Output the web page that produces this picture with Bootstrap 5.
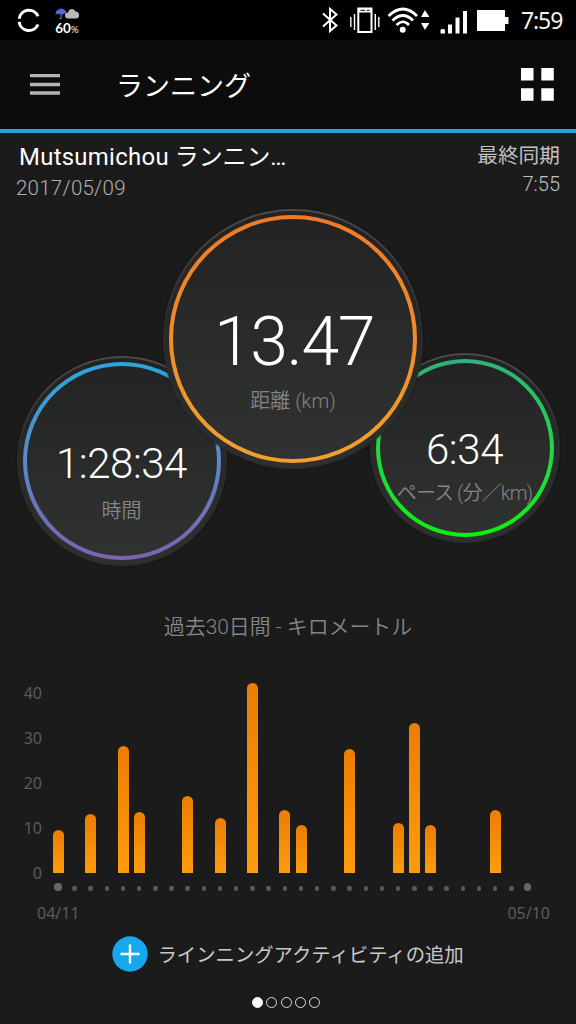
<!DOCTYPE html>
<html lang="ja">
<head>
<meta charset="utf-8">
<meta name="viewport" content="width=device-width, initial-scale=1">
<title>ランニング</title>
<link href="https://cdn.jsdelivr.net/npm/bootstrap@5.3.0/dist/css/bootstrap.min.css" rel="stylesheet">
<style>
body{width:576px;height:1024px;background:#1b1b1b;color:#fff;font-family:Roboto,"Noto Sans CJK JP",sans-serif;overflow:hidden;line-height:1}
.statusbar{height:40px;background:#000}
.statusbar svg{display:block}
.clock{font:400 23px/40px "Noto Sans",sans-serif;letter-spacing:-1.1px;width:56px;padding-left:1px;color:#f2f2f2}
.appbar{height:93px;background:#0c0c0c;border-bottom:4px solid #2ca2dc;box-shadow:0 2px 0 #09202d;padding:0 22px 0 30px}
.appbar h1{font-size:27px;font-weight:400;line-height:89px;margin:0 auto 0 56px;padding-top:5px}
.info{height:76px;padding:8px 16px 0;white-space:nowrap}
.nm{font-size:23.9px;line-height:32px;padding-left:3px}
.nm span{letter-spacing:.3px}
.dt{font-size:20.5px;line-height:30px;font-weight:300;color:#b0b0b0;letter-spacing:.25px}
.sync{font-size:20.7px;line-height:30px;color:#c0c0c0;font-weight:400}
.sync .at{font-size:20px;font-weight:300;line-height:26px}
.dials{height:357px;padding-left:16.5px}
.dial{border-radius:50%;flex:none;background:linear-gradient(#4c4a4a,#2b2b2b 45%,#2d2d2d);padding:2px;box-shadow:0 0 2px #111}
.rim{border-radius:50%;width:100%;height:100%;background:linear-gradient(#222,#292929 50%,#2f2f30);padding:4px}
.ring{border-radius:50%;width:100%;height:100%;padding:4px}
.face{border-radius:50%;width:100%;height:100%;background:linear-gradient(#232323,#303232);white-space:nowrap;display:flex;flex-direction:column;align-items:center}
.d-time{width:210px;height:210px;margin-top:147px}
.d-time .ring{background:linear-gradient(#2ba6dc,#5a88c8 50%,#7d62b0)}
.d-dist{width:260px;height:260px;margin-left:-63.5px;z-index:1}
.d-dist .ring{background:linear-gradient(#ee7a28,#f2a12c)}
.d-pace{width:190px;height:190px;margin-left:-53.5px;margin-top:143.5px}
.d-pace .ring{background:linear-gradient(#2eb07d,#25d548 50%,#10f010)}
.val{font-weight:300;color:#fff;font-size:42px;line-height:50px}
.d-time .val{letter-spacing:-.45px;margin-top:73px}
.d-time .lbl{margin-top:8px}
.d-dist .val{font-size:68px;line-height:80px;letter-spacing:-1.4px;margin-top:83px;padding-left:2px}
.d-dist .lbl{margin-top:5px}
.d-pace .val{letter-spacing:-.4px;margin-top:62px}
.d-pace .lbl{margin-top:4px;letter-spacing:-.9px}
.lbl{font-weight:350;color:#858585;font-size:20px;line-height:28px}
.lbl span{font-weight:300}
.cap{font-size:20.9px;line-height:30px;margin-top:46px;color:#858585;font-weight:350}
.chart{margin-top:28px;height:203.5px}
.yaxis{width:42px;height:225px;margin-top:1px;font:16px/45px "Noto Sans",sans-serif;color:#5c5c5c;text-align:right}
.yaxis div{height:45px}
.bars{display:grid;grid-template-columns:repeat(30,16.2px);margin-left:8.2px;height:202.5px;align-items:end;justify-items:center}
.bars i{width:11px;border-radius:5.5px 5.5px 0 0;background:linear-gradient(#ec7d02,#fd9c0e)}
.dots{display:grid;grid-template-columns:repeat(30,16.2px);padding-left:50.1px;justify-items:center;align-items:end;height:17px}
.dots i{width:4.4px;height:4.4px;border-radius:50%;background:#5a5a5a}
.dots i:first-child,.dots i:last-child{width:7.5px;height:7.5px;background:#666}
.dates{font:16px/22px "Noto Sans",sans-serif;color:#5c5c5c;padding:0 26px 0 37px;margin-top:11px}
.add{margin-top:12px;height:36px;padding-left:112px}
.add .txt{font-size:19.35px;color:#c9c9c9;white-space:nowrap;margin-left:9.5px;padding-top:4px;line-height:36px}
.pager{margin-top:25px;gap:3.4px;padding-right:4px}
.pager i{width:11px;height:11px;border-radius:50%;border:1.7px solid #ddd}
.pager i:first-child{background:#fff;border-color:#fff}
</style>
</head>
<body>
<header class="statusbar d-flex">
<svg width="520" height="40" viewBox="0 0 520 40" fill="none">
<g stroke="#fff" stroke-width="3"><path d="M19.200 18.700A9.800 9.800 0 0 1 38 16.300M19.200 21.800A9.800 9.800 0 0 0 38 24.500"/></g>
<path d="M55.500 15Q55.500 9 60.500 9V7.800H61.500V9Q66.500 9 67 14.500L65 13.500L63 14.500L61.800 13.800V18Q61.500 20 59.500 19.500V18.200Q60.500 18.500 60.500 17.500V13.500L58.500 14.500L57.500 13.500Z" fill="#4c6edb"/>
<path d="M68 18.500C64 18.500 64 13 68 12.800C68.500 8 74 7.800 75.500 11.500C80 11.500 80.500 18.500 76 18.500Z" fill="#b9b9b9"/>
<text x="55.300" y="33" fill="#fff" font-family="Lato" font-weight="700" font-size="13.500" textLength="15.500">60</text><text x="71" y="33" fill="#fff" font-family="Lato" font-size="9.500" textLength="8">%</text>
<path d="M323 13.500L336.500 25.500L330 31V9L336.500 14.500L323 26.500" stroke="#fff" stroke-width="2"/>
<path d="M358.300 8.500H371.500V32H358.300Z" stroke="#fff" stroke-width="2"/><path d="M358 8H372V12.500H358Z" fill="#fff"/><path d="M360.500 10.300H365M367 10.300H369.500" stroke="#000"/>
<path d="M354.500 14V30M350.800 17V27M375.300 14V30M378.800 17V27" stroke="#fff" stroke-width="1.400"/>
<g stroke="#fff" stroke-width="2.700"><path d="M388.500 16Q403 2 417 16M392.500 20.500Q403 10.500 413 20.500M396.500 25Q403 18.500 409 25"/></g><circle cx="402.700" cy="29.700" r="3" fill="#fff"/>
<path d="M421 17L425 10L429.300 17ZM421 23H429.300L425 30ZM440.500 30.500Q440.500 29 442 29H443.500Q445 29 445 30.500V33.500H440.500ZM448 24.500H452V33.500H448ZM455.500 17.500H459.500V33.500H455.500ZM463 11H467V33.500H463ZM477 10H505V17H508.500V24H505V31H477Z" fill="#fff"/>
</svg>
<div class="clock">7:59</div>
</header>
<nav class="appbar d-flex align-items-center">
<svg width="30" height="21"><path d="M0 1.700H30M0 10.500H30M0 19H30" stroke="#b4b4b4" stroke-width="3.300"/></svg>
<h1>ランニング</h1>
<svg width="33" height="33"><path d="M0 0H12.500V12.500H0ZM20.300 0H32.800V12.500H20.300ZM0 20.300H12.500V32.800H0ZM20.300 20.300H32.800V32.800H20.300Z" fill="#fff"/></svg>
</nav>
<main>
<section class="info d-flex justify-content-between">
<div><div class="nm"><span>Mutsumichou</span> ランニン…</div><div class="dt">2017/05/09</div></div>
<div class="sync text-end"><div>最終同期</div><div class="at">7:55</div></div>
</section>
<section class="dials d-flex align-items-start">
<div class="dial d-time"><div class="rim"><div class="ring"><div class="face"><div class="val">1:28:34</div><div class="lbl">時間</div></div></div></div></div>
<div class="dial d-dist position-relative"><div class="rim"><div class="ring"><div class="face"><div class="val">13.47</div><div class="lbl">距離 <span>(km)</span></div></div></div></div></div>
<div class="dial d-pace"><div class="rim"><div class="ring"><div class="face"><div class="val">6:34</div><div class="lbl">ペース <span>(</span>分／<span>km)</span></div></div></div></div></div>
</section>
<h2 class="cap text-center mb-0">過去30日間 - キロメートル</h2>
<section class="chart d-flex">
<div class="yaxis"><div>40</div><div>30</div><div>20</div><div>10</div><div>0</div></div>
<div class="bars" id="bars"></div>
</section>
<div class="dots" id="dots"></div>
<div class="dates d-flex justify-content-between"><span>04/11</span><span>05/10</span></div>
<div class="add d-flex align-items-center">
<svg width="36" height="36"><circle cx="18" cy="18" r="17.700" fill="#16a8ea"/><path d="M8.500 18H27.500M18 8.500V27.500" stroke="#fff" stroke-width="2.400"/></svg>
<span class="txt">ラインニングアクティビティの追加</span>
</div>
<div class="pager d-flex justify-content-center"><i></i><i></i><i></i><i></i><i></i></div>
</main>
<script>
// bar heights in pixels by day index
const runs={0:42.5,2:58.5,4:126.5,5:60.5,8:76.5,10:55,12:189.5,14:62.500,15:47.5,18:123.500,21:49.500,22:149.500,23:47.500,27:62.500};
for(let d=0;d<30;d++){
  const b=document.createElement('i');
  b.style.height=(runs[d]||0)+'px';
  document.getElementById('bars').append(b);
  document.getElementById('dots').append(document.createElement('i'));
}
</script>
<script src="https://cdn.jsdelivr.net/npm/bootstrap@5.3.0/dist/js/bootstrap.bundle.min.js"></script>
</body>
</html>
